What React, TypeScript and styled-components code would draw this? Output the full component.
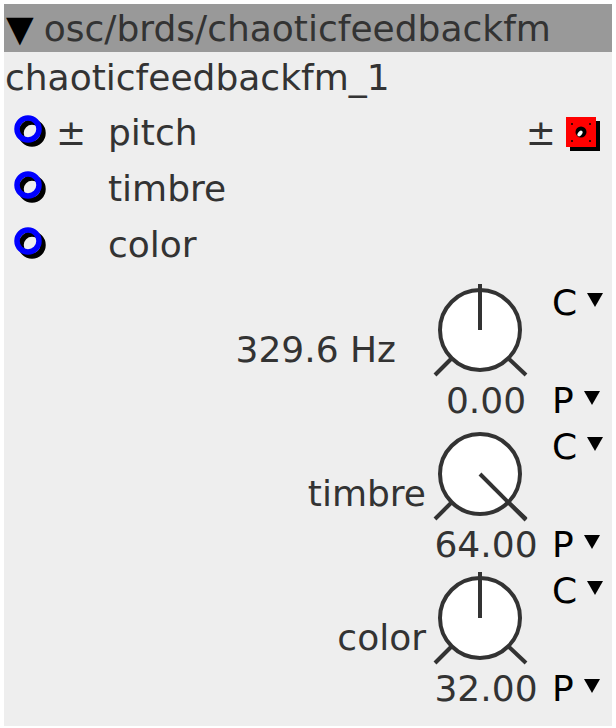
import styled, { createGlobalStyle } from 'styled-components'

const GlobalStyle = createGlobalStyle`
  body {
    margin: 0;
    background: #fff;
    font-family: 'DejaVu Sans', 'Liberation Sans', sans-serif;
  }
`

interface IKnob {
  label: string
  value: string
  pos: number // 0..1
  labelPad?: number
}

const knobs: IKnob[] = [
  { label: '329.6 Hz', value: '0.00', pos: 0.5, labelPad: 30 },
  { label: 'timbre', value: '64.00', pos: 1 },
  { label: 'color', value: '32.00', pos: 0.5 }
]

const ports = [
  { name: 'pitch', bipolar: true },
  { name: 'timbre', bipolar: false },
  { name: 'color', bipolar: false }
]

const Panel = styled.div`
  margin: 4px;
  width: 608px;
  background: #eeeeee;
  color: #333;
  font-size: 36px;
  padding-bottom: 16px;
`

const Header = styled.div`
  height: 48px;
  display: flex;
  align-items: center;
  padding-left: 2px;
  background: #999999;
  white-space: nowrap;
`

const Caret = styled.span`
  color: #000;
  margin-right: 10px;
`

const Title = styled.div`
  height: 50px;
  display: flex;
  align-items: center;
  padding-left: 1px;
  margin-bottom: 2px;
`

const PortRow = styled.div`
  height: 56px;
  display: flex;
  align-items: center;
  padding: 0 12px 0 10px;
`

const Jack = styled.svg`
  width: 36px;
  height: 36px;
  flex: none;
  margin-top: 2px;
`

const SignSlot = styled.div`
  width: 52px;
  padding-left: 6px;
  flex: none;
`

const PortLabel = styled.div`
  flex: 1;
`

const OutGroup = styled.div`
  display: flex;
  align-items: center;
  gap: 10px;
`

const OutJack = styled.svg`
  width: 34px;
  height: 34px;
  margin-top: 4px;
`

const Knobs = styled.div`
  margin-top: 10px;
  display: flex;
  flex-direction: column;
  gap: 4px;
`

const KnobBlock = styled.div`
  display: flex;
  height: 140px;
`

const KnobLabel = styled.div<{ $pad?: number }>`
  flex: 1;
  align-self: center;
  margin-top: -6px;
  text-align: right;
  padding-right: ${(p) => 6 + (p.$pad || 0)}px;
`

const KnobColumn = styled.div`
  width: 108px;
  display: flex;
  flex-direction: column;
`

const KnobValue = styled.div`
  height: 42px;
  line-height: 42px;
  margin-top: 2px;
  text-align: center;
`

const ModeColumn = styled.div`
  width: 60px;
  margin-left: 12px;
  display: flex;
  flex-direction: column;
  justify-content: space-between;
  color: #000;
`

const ModeItem = styled.div`
  height: 42px;
  line-height: 42px;
  display: flex;
  align-items: flex-start;
`

const ModeArrow = styled.span`
  width: 0;
  height: 0;
  margin: 11px 0 0 10px;
  border-left: 8px solid transparent;
  border-right: 8px solid transparent;
  border-top: 14px solid #000;
`

function PortIcon() {
  return (
    <Jack viewBox='0 0 36 36'>
      <circle cx='18' cy='18' r='11' fill='none' stroke='#000' strokeWidth='5.5' />
      <circle cx='14' cy='14' r='11' fill='none' stroke='#0000ff' strokeWidth='5.5' />
    </Jack>
  )
}

function OutIcon() {
  return (
    <OutJack viewBox='0 0 34 34'>
      <rect x='4' y='4' width='30' height='30' fill='#000' />
      <rect x='0' y='0' width='30' height='30' fill='#ff0000' />
      {[
        [5, 6],
        [23, 6],
        [5, 23],
        [23, 23]
      ].map(([x, y]) => (
        <rect key={`${x}-${y}`} x={x} y={y} width='2' height='2' fill='#400' />
      ))}
      <circle cx='15' cy='15' r='5.5' fill='#000' />
      <ellipse cx='14' cy='16.5' rx='2' ry='3.2' transform='rotate(40 14 16.5)' fill='#fff' />
    </OutJack>
  )
}

function Knob({ pos }: { pos: number }) {
  // angle from straight up, -135..135
  const a = ((pos - 0.5) * 270 * Math.PI) / 180
  const dx = Math.sin(a)
  const dy = -Math.cos(a)
  const k = 46 / Math.max(Math.abs(dx), Math.abs(dy))
  return (
    <svg width='96' height='96' viewBox='0 0 96 96'>
      <line x1='20' y1='76' x2='3' y2='93' stroke='#333' strokeWidth='4' />
      <line x1='76' y1='76' x2='94' y2='93' stroke='#333' strokeWidth='4' />
      <circle cx='48' cy='48' r='40' fill='#fff' stroke='#333' strokeWidth='4' />
      <line x1='48' y1='48' x2={48 + dx * k} y2={48 + dy * k} stroke='#333' strokeWidth='4' />
    </svg>
  )
}

export default function App() {
  return (
    <>
      <GlobalStyle />
      <Panel>
        <Header>
          <Caret>▼</Caret>osc/brds/chaoticfeedbackfm
        </Header>
        <Title>chaoticfeedbackfm_1</Title>

        {/* Inputs */}
        {ports.map((p, i) => (
          <PortRow key={p.name}>
            <PortIcon />
            <SignSlot>{p.bipolar ? '±' : ''}</SignSlot>
            <PortLabel>{p.name}</PortLabel>
            {i === 0 && (
              <OutGroup>
                <span>±</span>
                <OutIcon />
              </OutGroup>
            )}
          </PortRow>
        ))}

        {/* Knobs */}
        <Knobs>
          {knobs.map((k) => (
            <KnobBlock key={k.label}>
              <KnobLabel $pad={k.labelPad}>{k.label}</KnobLabel>
              <KnobColumn>
                <Knob pos={k.pos} />
                <KnobValue>{k.value}</KnobValue>
              </KnobColumn>
              <ModeColumn>
                <ModeItem>
                  C<ModeArrow />
                </ModeItem>
                <ModeItem>
                  P<ModeArrow />
                </ModeItem>
              </ModeColumn>
            </KnobBlock>
          ))}
        </Knobs>
      </Panel>
    </>
  )
}
